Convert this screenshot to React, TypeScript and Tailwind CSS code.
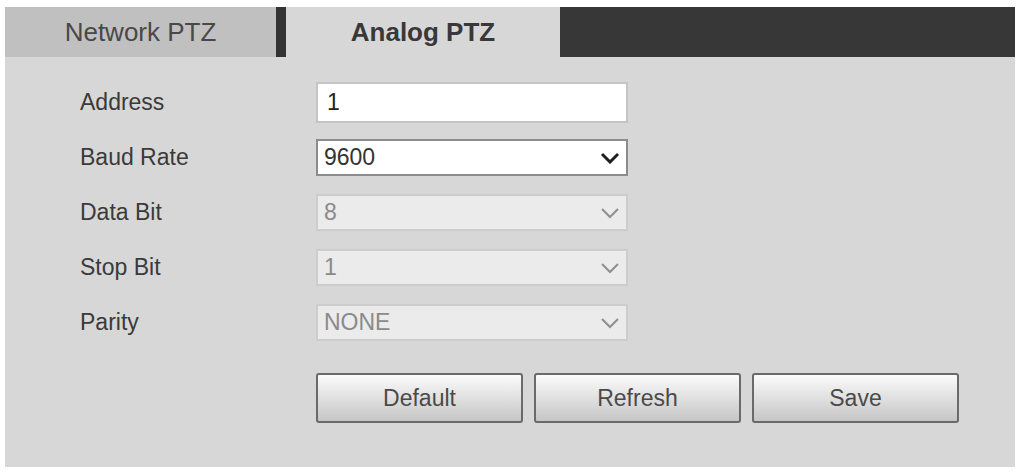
const rows = [
  { label: "Address", value: "1", kind: "input" },
  { label: "Baud Rate", value: "9600", kind: "select" },
  { label: "Data Bit", value: "8", kind: "disabled" },
  { label: "Stop Bit", value: "1", kind: "disabled" },
  { label: "Parity", value: "NONE", kind: "disabled" },
]

function Chevron({ disabled }: { disabled?: boolean }) {
  return (
    <svg width="20" height="12" viewBox="0 0 20 12" className="shrink-0">
      <polyline
        points="2,2 10,10 18,2"
        fill="none"
        stroke={disabled ? "#8f8f8f" : "#1f1f1f"}
        strokeWidth={disabled ? 2 : 3}
        strokeLinejoin="miter"
      />
    </svg>
  )
}

function Field({ value, kind }: { value: string; kind: string }) {
  if (kind === "input") {
    return (
      <div className="w-[312px] h-[41px] bg-white border-2 border-[#c4c4c4] flex items-center px-[9px] text-[23px] text-[#222]">
        {value}
      </div>
    )
  }
  if (kind === "select") {
    return (
      <div className="w-[312px] h-[37px] bg-white border-2 border-[#8c8c8c] flex items-center justify-between pl-[6px] pr-[6px] text-[23px] text-[#333]">
        <span>{value}</span>
        <Chevron />
      </div>
    )
  }
  return (
    <div className="w-[312px] h-[37px] bg-[#ebebeb] border-2 border-[#cdcdcd] flex items-center justify-between pl-[6px] pr-[6px] text-[23px] text-[#8a8a8a]">
      <span>{value}</span>
      <Chevron disabled />
    </div>
  )
}

export default function App() {
  return (
    <div className="w-[1017px] h-[473px] bg-white pt-[7px] pl-[5px] font-['Liberation_Sans',Arial,sans-serif]">
      <div className="w-[1010px] h-[460px] bg-[#d7d7d7] flex flex-col">
        <div className="flex h-[50px] shrink-0">
          <div className="w-[271px] bg-[#c0c0c0] flex items-center justify-center text-[26px] text-[#484848]">
            Network PTZ
          </div>
          <div className="w-[10px] bg-[#333]" />
          <div className="w-[274px] bg-[#d7d7d7] flex items-center justify-center text-[26px] font-bold text-[#383838]">
            Analog PTZ
          </div>
          <div className="flex-1 bg-[#373737]" />
        </div>

        <div className="pt-[18px] pl-[75px]">
          {rows.map((row, i) => (
            <div key={i} className="h-[55px] flex items-center">
              <div className="w-[236px] text-[23px] text-[#3a3a3a]">{row.label}</div>
              <Field value={row.value} kind={row.kind} />
            </div>
          ))}

          <div className="flex gap-[11px] mt-[23px] ml-[236px]">
            {["Default", "Refresh", "Save"].map((b) => (
              <button
                key={b}
                className="w-[207px] h-[50px] rounded-[3px] border-2 border-[#6a6a6a] bg-gradient-to-b from-[#fbfbfb] to-[#c6c6c6] text-[23px] text-[#4a4a4a]"
              >
                {b}
              </button>
            ))}
          </div>
        </div>
      </div>
    </div>
  )
}
